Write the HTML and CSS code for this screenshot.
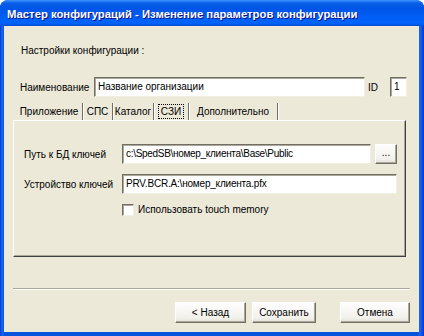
FILE: index.html
```html
<!DOCTYPE html>
<html lang="ru">
<head>
    <meta charset="UTF-8">
    <title>Мастер конфигураций</title>
    <link rel="stylesheet" href="styles.css">
</head>
<body>
    <div class="window">
        <div class="title-bar">Мастер конфигураций - Изменение параметров конфигурации</div>

        <div class="client">
            <div class="caption">Настройки конфигурации :</div>

            <div class="name-row">
                <span class="name-label">Наименование</span>
                <div class="field name-field">Название организации</div>
                <span class="id-label">ID</span>
                <div class="field id-field">1</div>
            </div>

            <!-- вкладки -->
            <div class="tabs">
                <div class="tab tab-app">Приложение</div>
                <div class="tab tab-sps">СПС</div>
                <div class="tab tab-cat">Каталог</div>
                <div class="tab tab-szi active"><span class="focus">СЗИ</span></div>
                <div class="tab tab-extra">Дополнительно</div>
            </div>

            <div class="panel">
                <div class="row">
                    <span class="row-label">Путь к БД ключей</span>
                    <div class="field path-field">c:\SpedSB\номер_клиента\Base\Public</div>
                    <div class="btn browse-btn">...</div>
                </div>
                <div class="row">
                    <span class="row-label">Устройство ключей</span>
                    <div class="field device-field">PRV.BCR.A:\номер_клиента.pfx</div>
                </div>
                <div class="check-row">
                    <span class="checkbox"></span>
                    <span>Использовать touch memory</span>
                </div>
            </div>

            <div class="separator"></div>

            <div class="buttons">
                <div class="btn btn-back">&lt; Назад</div>
                <div class="btn btn-save">Сохранить</div>
                <div class="btn btn-cancel">Отмена</div>
            </div>
        </div>
    </div>
</body>
</html>
```

FILE: styles.css
```css
* {
    margin: 0;
    padding: 0;
    box-sizing: border-box;
}

body {
    background: #fff;
    font-family: 'Liberation Sans', Arial, sans-serif;
    font-size: 10px;
    color: #000;
}

.window {
    width: 424px;
    height: 336px;
    display: flex;
    flex-direction: column;
    border-radius: 8px 8px 0 0;
    background: linear-gradient(to right, #0831d9 0, #166aee 2px, #0855dd 4px, #0855dd 418px, #166aee 420px, #0831d9 424px);
    overflow: hidden;
}

.title-bar {
    height: 26px;
    flex: none;
    padding: 2px 7px 0;
    display: flex;
    align-items: center;
    color: #fff;
    font-weight: bold;
    font-size: 11.3px;
    text-shadow: 1px 1px #0f1089;
    background: linear-gradient(to bottom, #3d95ff 0, #0a5fe8 3px, #0055e5 8px, #0058ee 45%, #0064fb 85%, #0060f5 92%, #0049d0 100%);
}

.client {
    flex: 1;
    margin: 0 5px 4px 4px;
    padding-left: 9px;
    background: #ece9d8;
}

.caption {
    margin: 18px 0 0 8px;
    line-height: 13px;
}

.name-row {
    display: flex;
    align-items: center;
    height: 20px;
    margin: 20px 0 0 7px;
}

.name-label {
    width: 74px;
}

.field {
    height: 20px;
    line-height: 18px;
    padding: 0 3px;
    background: #fff;
    border: 1px solid;
    border-color: #716f64 #f1efe2 #f1efe2 #716f64;
    box-shadow: inset 1px 1px #aca899;
    white-space: nowrap;
    overflow: hidden;
}

.name-field {
    width: 271px;
}

.id-label {
    margin-left: 3px;
    width: 22px;
}

.id-field {
    width: 17px;
}

.tabs {
    display: flex;
    height: 17px;
    margin-top: 6px;
    margin-left: 1px;
}

.tab {
    height: 17px;
    line-height: 17px;
    text-align: center;
    border-right: 1px solid #716f64;
    box-shadow: 1px 0 #fff;
}

.tab-app { width: 69px; padding-left: 2px; }
.tab-sps { width: 30px; }
.tab-cat { width: 41px; }
.tab-szi { width: 35px; }
.tab-extra { width: 89px; }

.tab .focus {
    display: inline-block;
    line-height: 13px;
    padding: 0 2px;
    outline: 1px dotted #000;
}

.panel {
    width: 393px;
    height: 137px;
    padding: 23px 0 0 10px;
    border: 1px solid;
    border-color: #fff #404040 #404040 #fff;
    box-shadow: inset -1px -1px #aca899;
}

.row {
    display: flex;
    align-items: center;
    height: 20px;
    margin-bottom: 10px;
}

.row-label {
    width: 98px;
}

.path-field {
    width: 249px;
    letter-spacing: -0.3px;
}

.device-field {
    width: 275px;
    letter-spacing: -0.2px;
}

.btn {
    height: 21px;
    display: flex;
    align-items: center;
    justify-content: center;
    background: linear-gradient(to bottom, #fefefe, #f1f0ea 80%, #e3e1d6);
    border: 1px solid;
    border-color: #fff #716f64 #716f64 #fff;
    box-shadow: inset -1px -1px #aca899;
}

.browse-btn {
    width: 22px;
    height: 20px;
    margin-left: 4px;
    padding-bottom: 3px;
}

.check-row {
    display: flex;
    align-items: center;
    height: 13px;
    margin-top: -1px;
    padding-left: 98px;
}

.checkbox {
    width: 12px;
    height: 12px;
    margin-right: 4px;
    background: #fff;
    border: 1px solid;
    border-color: #716f64 #f1efe2 #f1efe2 #716f64;
    box-shadow: inset 1px 1px #aca899;
}

.separator {
    width: 397px;
    height: 2px;
    margin-top: 31px;
    border-top: 1px solid #aca899;
    border-bottom: 1px solid #fff;
}

.buttons {
    display: flex;
    margin-top: 12px;
    padding-left: 162px;
}

.btn-back { width: 71px; }
.btn-save { width: 64px; margin-left: 6px; }
.btn-cancel { width: 70px; margin-left: 24px; }
```
